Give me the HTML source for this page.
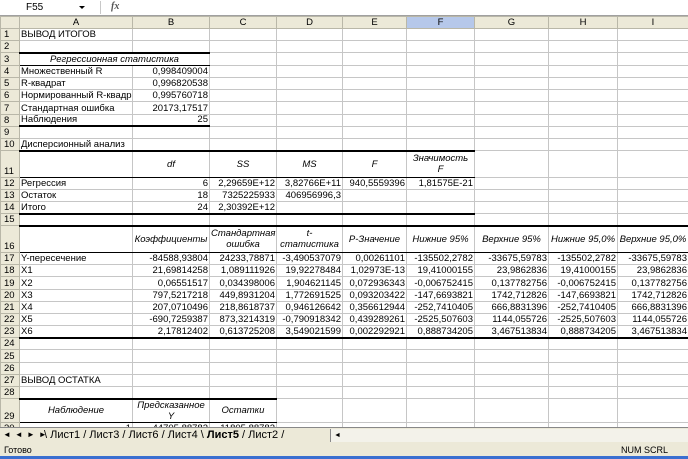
<!DOCTYPE html>
<html><head><meta charset="utf-8"><style>
*{margin:0;padding:0;box-sizing:border-box}
body{width:688px;height:459px;overflow:hidden;background:#fff;font-family:"Liberation Sans",Arial,sans-serif;font-size:9.5px;color:#000;position:relative}
#fb{position:absolute;left:0;top:0;width:688px;height:16px;background:#fff;border-bottom:1px solid #a0a0a0}
#nb{position:absolute;left:8px;top:1px;width:82px;height:13px;font-size:10px;line-height:13px;padding-left:18px}
#arr{position:absolute;left:79px;top:6px;width:0;height:0;border-left:3px solid transparent;border-right:3px solid transparent;border-top:3px solid #000}
#sep{position:absolute;left:100px;top:1px;width:1px;height:13px;background:#c8c8c8}
#fx{position:absolute;left:111px;top:1px;font-style:italic;font-weight:bold;font-family:"Liberation Serif",serif;font-size:10px;color:#555}
table{position:absolute;left:0;top:16px;border-collapse:collapse;table-layout:fixed;width:688px}
td{border:1px solid #c6c6c6;height:12.2px;padding:0 1px;white-space:nowrap;overflow:hidden;font-size:9.5px;line-height:10px;vertical-align:bottom}
td.h{background:#ece9d8;border-color:#b9b7a8;text-align:center;color:#000}
td.rh{background:#ece9d8;border-color:#b9b7a8;text-align:left;padding-left:3px;color:#000}
td.sel{background:#b6c8ea}
tr.hd td{height:12px;vertical-align:middle}
tr.t td{height:26.5px}
tr.t2 td{height:24px}
.r{text-align:right}
.c{text-align:center}
.i{font-style:italic;text-align:center;vertical-align:middle;line-height:11px}
.tt{border-top:2px solid #000}
.bb{border-bottom:1px solid #000}
.tb{border-bottom:2px solid #000}
#tabs{position:absolute;left:0;top:427px;width:688px;height:16px;background:#ece9d8;border-top:1px solid #888}
#tabs .nav{position:absolute;left:3px;top:2px;font-size:8px;letter-spacing:4px}
#tabs .tl{position:absolute;left:44px;top:1px;font-size:11px;white-space:nowrap}
#sb{position:absolute;left:330px;top:1px;width:358px;height:13px;background:#f3f2ea;border-left:1px solid #888}
#st{position:absolute;left:0;top:443px;width:688px;height:16px;background:#ece9d8;font-size:9px;line-height:13px;border-bottom:3px solid #3a6fd0}
</style></head><body>
<div id="fb"><div id="nb">F55</div><div id="arr"></div><div id="sep"></div><div id="fx">fx</div></div>
<table>
<colgroup><col style="width:19px"><col style="width:113px"><col style="width:77px"><col style="width:67px"><col style="width:66px"><col style="width:64px"><col style="width:68px"><col style="width:74px"><col style="width:69px"><col style="width:71px"></colgroup>
<tr class="hd"><td class="h"></td><td class="h">A</td><td class="h">B</td><td class="h">C</td><td class="h">D</td><td class="h">E</td><td class="h sel">F</td><td class="h">G</td><td class="h">H</td><td class="h">I</td></tr>
<tr><td class="rh">1</td><td>ВЫВОД ИТОГОВ</td><td></td><td></td><td></td><td></td><td></td><td></td><td></td><td></td></tr>
<tr><td class="rh">2</td><td class="tb"></td><td class="tb"></td><td></td><td></td><td></td><td></td><td></td><td></td><td></td></tr>
<tr><td class="rh">3</td><td colspan="2" class="i bb" style="text-align:center">Регрессионная статистика</td><td></td><td></td><td></td><td></td><td></td><td></td><td></td></tr>
<tr><td class="rh">4</td><td>Множественный R</td><td class="r">0,998409004</td><td></td><td></td><td></td><td></td><td></td><td></td><td></td></tr>
<tr><td class="rh">5</td><td>R-квадрат</td><td class="r">0,996820538</td><td></td><td></td><td></td><td></td><td></td><td></td><td></td></tr>
<tr><td class="rh">6</td><td>Нормированный R-квадрат</td><td class="r">0,995760718</td><td></td><td></td><td></td><td></td><td></td><td></td><td></td></tr>
<tr><td class="rh">7</td><td>Стандартная ошибка</td><td class="r">20173,17517</td><td></td><td></td><td></td><td></td><td></td><td></td><td></td></tr>
<tr><td class="rh">8</td><td class="tb">Наблюдения</td><td class="r tb">25</td><td></td><td></td><td></td><td></td><td></td><td></td><td></td></tr>
<tr><td class="rh">9</td><td></td><td></td><td></td><td></td><td></td><td></td><td></td><td></td><td></td></tr>
<tr><td class="rh">10</td><td class="tb">Дисперсионный анализ</td><td class="tb"></td><td class="tb"></td><td class="tb"></td><td class="tb"></td><td class="tb"></td><td></td><td></td><td></td></tr>
<tr class="t"><td class="rh">11</td><td class="bb"></td><td class="i bb">df</td><td class="i bb">SS</td><td class="i bb">MS</td><td class="i bb">F</td><td class="i bb">Значимость<br>F</td><td></td><td></td><td></td></tr>
<tr><td class="rh">12</td><td>Регрессия</td><td class="r">6</td><td class="r">2,29659E+12</td><td class="r">3,82766E+11</td><td class="r">940,5559396</td><td class="r">1,81575E-21</td><td></td><td></td><td></td></tr>
<tr><td class="rh">13</td><td>Остаток</td><td class="r">18</td><td class="r">7325225933</td><td class="r">406956996,3</td><td></td><td></td><td></td><td></td><td></td></tr>
<tr><td class="rh">14</td><td class="tb">Итого</td><td class="r tb">24</td><td class="r tb">2,30392E+12</td><td class="tb"></td><td class="tb"></td><td class="tb"></td><td></td><td></td><td></td></tr>
<tr><td class="rh">15</td><td class="tb"></td><td class="tb"></td><td class="tb"></td><td class="tb"></td><td class="tb"></td><td class="tb"></td><td class="tb"></td><td class="tb"></td><td class="tb"></td></tr>
<tr class="t"><td class="rh">16</td><td class="bb"></td><td class="i bb">Коэффициенты</td><td class="i bb">Стандартная<br>ошибка</td><td class="i bb">t-<br>статистика</td><td class="i bb">P-Значение</td><td class="i bb">Нижние 95%</td><td class="i bb">Верхние 95%</td><td class="i bb">Нижние 95,0%</td><td class="i bb">Верхние 95,0%</td></tr>
<tr><td class="rh">17</td><td>Y-пересечение</td><td class="r">-84588,93804</td><td class="r">24233,78871</td><td class="r">-3,490537079</td><td class="r">0,00261101</td><td class="r">-135502,2782</td><td class="r">-33675,59783</td><td class="r">-135502,2782</td><td class="r">-33675,59783</td></tr>
<tr><td class="rh">18</td><td>X1</td><td class="r">21,69814258</td><td class="r">1,089111926</td><td class="r">19,92278484</td><td class="r">1,02973E-13</td><td class="r">19,41000155</td><td class="r">23,9862836</td><td class="r">19,41000155</td><td class="r">23,9862836</td></tr>
<tr><td class="rh">19</td><td>X2</td><td class="r">0,06551517</td><td class="r">0,034398006</td><td class="r">1,904621145</td><td class="r">0,072936343</td><td class="r">-0,006752415</td><td class="r">0,137782756</td><td class="r">-0,006752415</td><td class="r">0,137782756</td></tr>
<tr><td class="rh">20</td><td>X3</td><td class="r">797,5217218</td><td class="r">449,8931204</td><td class="r">1,772691525</td><td class="r">0,093203422</td><td class="r">-147,6693821</td><td class="r">1742,712826</td><td class="r">-147,6693821</td><td class="r">1742,712826</td></tr>
<tr><td class="rh">21</td><td>X4</td><td class="r">207,0710496</td><td class="r">218,8618737</td><td class="r">0,946126642</td><td class="r">0,356612944</td><td class="r">-252,7410405</td><td class="r">666,8831396</td><td class="r">-252,7410405</td><td class="r">666,8831396</td></tr>
<tr><td class="rh">22</td><td>X5</td><td class="r">-690,7259387</td><td class="r">873,3214319</td><td class="r">-0,790918342</td><td class="r">0,439289261</td><td class="r">-2525,507603</td><td class="r">1144,055726</td><td class="r">-2525,507603</td><td class="r">1144,055726</td></tr>
<tr><td class="rh">23</td><td class="tb">X6</td><td class="r tb">2,17812402</td><td class="r tb">0,613725208</td><td class="r tb">3,549021599</td><td class="r tb">0,002292921</td><td class="r tb">0,888734205</td><td class="r tb">3,467513834</td><td class="r tb">0,888734205</td><td class="r tb">3,467513834</td></tr>
<tr><td class="rh">24</td><td></td><td></td><td></td><td></td><td></td><td></td><td></td><td></td><td></td></tr>
<tr><td class="rh">25</td><td></td><td></td><td></td><td></td><td></td><td></td><td></td><td></td><td></td></tr>
<tr><td class="rh">26</td><td></td><td></td><td></td><td></td><td></td><td></td><td></td><td></td><td></td></tr>
<tr><td class="rh">27</td><td>ВЫВОД ОСТАТКА</td><td></td><td></td><td></td><td></td><td></td><td></td><td></td><td></td></tr>
<tr><td class="rh">28</td><td class="tb"></td><td class="tb"></td><td class="tb"></td><td></td><td></td><td></td><td></td><td></td><td></td></tr>
<tr class="t2"><td class="rh">29</td><td class="i bb">Наблюдение</td><td class="i bb">Предсказанное<br>Y</td><td class="i bb">Остатки</td><td></td><td></td><td></td><td></td><td></td><td></td></tr>
<tr><td class="rh">30</td><td class="r">1</td><td class="r">44705,88782</td><td class="r">-11805,88782</td><td></td><td></td><td></td><td></td><td></td><td></td></tr>
</table>
<div id="tabs"><div class="nav">◄◄►►</div><div class="tl">\ Лист1 / Лист3 / Лист6 / Лист4 \ <b>Лист5</b> / Лист2 /</div><div id="sb"><span style="font-size:7px;padding-left:3px">◄</span></div></div>
<div id="st"><span style="position:absolute;left:4px;top:1px">Готово</span><span style="position:absolute;left:621px;top:1px">NUM SCRL</span></div>
</body></html>
